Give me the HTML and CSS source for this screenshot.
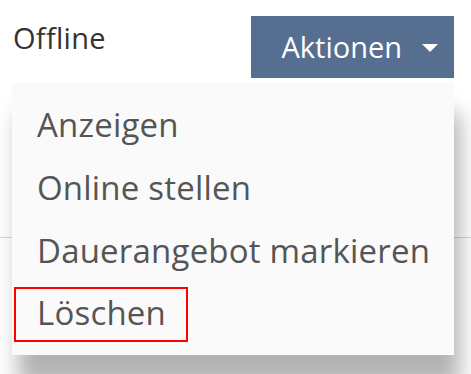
FILE: index.html
```html
<!DOCTYPE html>
<html lang="de">
<head>
    <meta charset="UTF-8">
    <meta name="viewport" content="width=device-width, initial-scale=1.0">
    <title>Angebot</title>
    <link rel="stylesheet" href="styles.css">
</head>
<body>

    <!-- Status row with actions dropdown -->
    <div class="status-row">
        <span class="status-label">Offline</span>

        <div class="actions">
            <button class="actions-button">
                Aktionen
                <span class="caret"></span>
            </button>

            <!-- Dropdown Menu -->
            <ul class="actions-menu">
                <li><a href="#">Anzeigen</a></li>
                <li><a href="#">Online stellen</a></li>
                <li><a href="#">Dauerangebot markieren</a></li>
                <li><a href="#" class="marked">Löschen</a></li>
            </ul>
        </div>
    </div>

</body>
</html>
```

FILE: styles.css
```css
body, html {
    margin: 0;
    padding: 0;
    height: 100%;
    background: #fff;
    font-family: 'Open Sans', 'Noto Sans', sans-serif;
    overflow: hidden;
}

/* Status Row */
.status-row {
    display: flex;
    justify-content: space-between;
    align-items: flex-start;
    height: 238px;
    box-sizing: border-box;
    padding: 16px 17px 0 13px;
    border-bottom: 1px solid #d6d6d6;
}

.status-label {
    font-size: 29px;
    line-height: 39px;
    letter-spacing: 0.3px;
    margin-top: 2px;
    color: #333;
}

/* Actions Button */
.actions {
    position: relative;
}

.actions-button {
    display: flex;
    align-items: center;
    height: 62px;
    padding: 0 16px 0 30px;
    border: none;
    background-color: #566f91;
    color: #fff;
    font-family: inherit;
    font-size: 29px;
    line-height: 62px;
    cursor: pointer;
}

.caret {
    width: 0;
    height: 0;
    margin-left: 20px;
    margin-top: 2px;
    border-left: 8px solid transparent;
    border-right: 8px solid transparent;
    border-top: 8px solid #fff;
}

/* Dropdown Menu */
.actions-menu {
    position: absolute;
    top: 67px;
    right: 0;
    width: 442px;
    box-sizing: border-box;
    margin: 0;
    padding: 10px 0;
    list-style: none;
    background: #fafafa;
    box-shadow: 6px 30px 20px rgba(0, 0, 0, 0.3);
}

.actions-menu li {
    line-height: 63px;
}

.actions-menu a {
    display: block;
    padding: 0 20px 0 25px;
    font-size: 33px;
    letter-spacing: 0.2px;
    white-space: nowrap;
    color: #555;
    text-decoration: none;
}

.actions-menu a.marked {
    width: fit-content;
    margin: 5px 0 3px 2px;
    padding: 0 20px 3px 21px;
    line-height: 48px;
    border: 2px solid #f00;
}
```
